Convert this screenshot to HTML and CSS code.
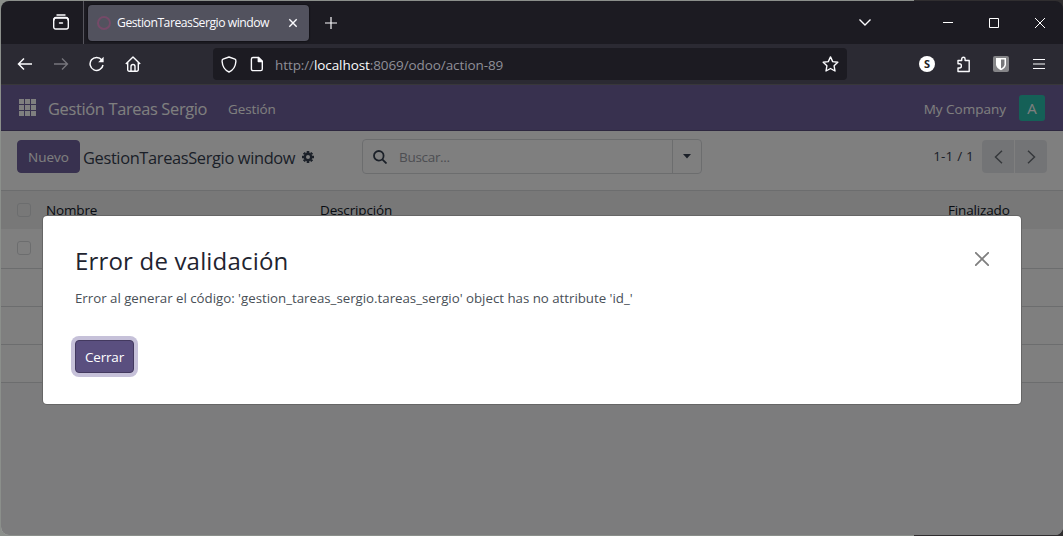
FILE: index.html
```html
<!DOCTYPE html>
<html lang="es">
<head>
<meta charset="utf-8">
<title>GestionTareasSergio window</title>
<link rel="stylesheet" href="styles.css">
</head>
<body>
<div class="window">
  <header class="tabbar">
    <div class="firefox-view">
      <svg width="18" height="18" viewBox="0 0 18 18" fill="none" stroke="#fbfbfe" stroke-width="1.400" stroke-linecap="round"><path d="M5 2h8"/><rect x="1.700" y="5" width="14.600" height="11" rx="2"/><path d="M2 7q0-2.500 2-2.500h10q2 0 2 2.500M7.500 10h3"/></svg>
    </div>
    <div class="tab">
      <span class="favicon"></span>
      <span class="tab-title">GestionTareasSergio window</span>
      <svg class="tab-close" width="10" height="10" viewBox="0 0 10 10" stroke="#fbfbfe" stroke-width="1.400"><path d="M1.300 1.300l7.400 7.400M8.700 1.300L1.300 8.700"/></svg>
    </div>
    <svg class="new-tab" width="12" height="12" viewBox="0 0 12 12" stroke="#fbfbfe" stroke-width="1.200"><path d="M6 0v12M0 6h12"/></svg>
    <div class="window-controls">
      <svg width="14" height="10" viewBox="0 0 14 10" fill="none" stroke="#fbfbfe" stroke-width="1.400"><path d="M1.500 1.500L7 7 12.500 1.500"/></svg>
      <svg class="minimize" width="10" height="10" viewBox="0 0 10 10" stroke="#fff"><path d="M0 4.500h10"/></svg>
      <svg width="10" height="10" viewBox="0 0 10 10" fill="none" stroke="#fff"><path d="M.5.5h9v9h-9z"/></svg>
      <svg width="10" height="10" viewBox="0 0 10 10" stroke="#fff"><path d="M0 0l10 10M10 0L0 10"/></svg>
    </div>
  </header>
  <div class="toolbar">
    <div class="nav-buttons">
      <svg width="16" height="16" viewBox="0 0 16 16" fill="none" stroke="#fbfbfe" stroke-width="1.500"><path d="M15 8H1.500M7 2.500L1.500 8 7 13.500"/></svg>
      <svg width="16" height="16" viewBox="0 0 16 16" fill="none" stroke="#77767d" stroke-width="1.300"><path d="M1 8h13.500M9 2.500L14.500 8 9 13.500"/></svg>
      <svg width="16" height="16" viewBox="0 0 16 16" fill="none" stroke="#fbfbfe" stroke-width="1.500"><path d="M12.800 4A6.500 6.500 0 1 0 14 9"/><path d="M14.600.800v5.400H9.200z" fill="#fbfbfe" stroke="none"/></svg>
      <svg width="16" height="16" viewBox="0 0 16 16" fill="none" stroke="#fbfbfe" stroke-width="1.400" stroke-linejoin="round"><path d="M.8 8L8 .9 15.200 8M2.700 6.500v7.200a1.500 1.500 0 0 0 1.500 1.500h7.600a1.500 1.500 0 0 0 1.500-1.500V6.500"/><path d="M6 15v-4.500a2 2 0 0 1 4 0V15"/></svg>
    </div>
    <div class="urlbar">
      <svg width="16" height="17" viewBox="0 0 16 17" fill="none" stroke="#fbfbfe" stroke-width="1.400" stroke-linejoin="round"><path d="M8 1l6 2.200c1 .4 1 1 .9 2.300C14.600 9.800 12.500 14 8 16 3.500 14 1.400 9.800 1.100 5.500 1 4.200 1 3.600 2 3.200z"/></svg>
      <svg class="page-icon" width="14" height="16" viewBox="0 0 14 16" fill="none" stroke="#fbfbfe" stroke-width="1.400" stroke-linejoin="round"><path d="M3 1.500h5.500L12.300 5.300v7.700a1.600 1.600 0 0 1-1.600 1.600H3A1.600 1.600 0 0 1 1.400 13V3A1.600 1.600 0 0 1 3 1.500z"/><path d="M8.300 1.500v4h4z" fill="#fbfbfe"/></svg>
      <span class="url">http://<span class="host">localhost</span>:8069/odoo/action-89</span>
      <svg class="star" width="17" height="16" viewBox="0 0 17 16" fill="none" stroke="#fbfbfe" stroke-width="1.400" stroke-linejoin="round"><path d="M8.500.9l2.200 4.700 5.100.7-3.700 3.500.9 5.200-4.500-2.500L4 15l.9-5.200L1.200 6.300l5.100-.7z"/></svg>
    </div>
    <div class="extensions">
      <span class="ext-s">S</span>
      <svg width="16" height="17" viewBox="0 0 16 17" fill="none" stroke="#fbfbfe" stroke-width="1.400" stroke-linejoin="round"><path d="M2 7.800V4.500h3.700V3a1.700 1.700 0 0 1 3.400 0v1.500h4.100V15.500H2V12h1.300a2 2 0 0 0 0-4.200z"/></svg>
      <svg width="16" height="16" viewBox="0 0 16 16"><rect width="16" height="16" rx="2" fill="#858588"/><path d="M3 2h10v6.300c0 3-2.500 4.700-5 5.900-2.500-1.200-5-2.900-5-5.900z" fill="#fff"/><path d="M8 3.600h3.500v4.700c0 2-1.700 3.200-3.500 4.200z" fill="#77777a"/></svg>
      <svg width="12" height="12" viewBox="0 0 12 12" stroke="#fbfbfe" stroke-width="1.200"><path d="M0 1.500h12M0 6h12M0 10.500h12"/></svg>
    </div>
  </div>
  <main class="app">
    <nav class="navbar">
      <svg width="17" height="17" viewBox="0 0 17 17" fill="#fff"><path d="M0 0h5v5H0zM6 0h5v5H6zM12 0h5v5h-5zM0 6h5v5H0zM6 6h5v5H6zM12 6h5v5h-5zM0 12h5v5H0zM6 12h5v5H6zM12 12h5v5h-5z"/></svg>
      <span class="brand">Gestión Tareas Sergio</span>
      <span class="menu">Gestión</span>
      <span class="company">My Company</span>
      <span class="avatar">A</span>
    </nav>
    <section class="control-panel">
      <button class="btn new">Nuevo</button>
      <span class="breadcrumb">GestionTareasSergio window</span>
      <svg class="gear" width="12" height="12" viewBox="-6 -6 12 12" fill="none" stroke="#374151"><circle r="3.200" stroke-width="2.400"/><path d="M0-6v2M0 6V4M-6 0h2M6 0H4M-4.200-4.200l1.400 1.400M4.200 4.200L2.800 2.800M-4.200 4.200l1.400-1.400M4.200-4.200L2.800-2.800" stroke-width="2.600"/></svg>
      <div class="search">
        <svg class="lens" width="14" height="14" viewBox="0 0 14 14" fill="none" stroke="#374151" stroke-width="1.800"><circle cx="5.800" cy="5.800" r="4.800"/><path d="M9.300 9.300l4.200 4.200"/></svg>
        <span class="placeholder">Buscar...</span>
        <span class="dropdown"><svg width="8" height="5" viewBox="0 0 8 5"><path d="M0 0h8L4 4.600z" fill="#374151"/></svg></span>
      </div>
      <span class="range">1-1 / 1</span>
      <div class="pager">
        <span><svg width="9" height="14" viewBox="0 0 9 14" fill="none" stroke="#6b7077" stroke-width="1.500"><path d="M8 .7L1.500 7 8 13.300"/></svg></span>
        <span><svg width="9" height="14" viewBox="0 0 9 14" fill="none" stroke="#6b7077" stroke-width="1.500"><path d="M1 .7L7.500 7 1 13.300"/></svg></span>
      </div>
    </section>
    <section class="list">
      <div class="row head"><i class="check"></i><span class="name">Nombre</span><span class="desc">Descripción</span><span class="done">Finalizado</span></div>
      <div class="row"><i class="check"></i></div>
      <div class="row"></div>
      <div class="row"></div>
      <div class="row"></div>
    </section>
    <div class="backdrop">
      <div class="dialog">
        <div class="dialog-head">
          <h1>Error de validación</h1>
          <svg class="dismiss" width="14" height="14" viewBox="0 0 14 14" stroke="#7f7f7f" stroke-width="1.800" stroke-linecap="round"><path d="M.8.800l12.400 12.400M13.200.800L.8 13.200"/></svg>
        </div>
        <p>Error al generar el código: 'gestion_tareas_sergio.tareas_sergio' object has no attribute 'id_'</p>
        <button class="btn close">Cerrar</button>
      </div>
    </div>
  </main>
</div>
</body>
</html>
```
FILE: styles.css
```css
* { box-sizing: border-box; }
body {
  margin: 0;
  width: 1063px;
  height: 536px;
  padding: 1px 0 1px 1px;
  overflow: hidden;
  background: linear-gradient(90deg, #8b8f8b 914px, #302e30 914px);
  font-family: "Open Sans", "Noto Sans", sans-serif;
  font-size: 13.5px;
  white-space: nowrap;
}
svg { display: block; flex: none; }
.window {
  height: 534px;
  border-radius: 8px;
  overflow: hidden;
  display: flex;
  flex-direction: column;
}
.tabbar {
  flex: none;
  height: 43px;
  display: flex;
  align-items: center;
  background: #1c1b22;
  color: #fbfbfe;
}
.firefox-view {
  width: 83px;
  height: 43px;
  padding: 12px 0 0 51px;
  border-right: 1px solid #55545c;
}
.tab {
  width: 221px;
  height: 36px;
  margin-left: 4px;
  padding: 0 11px 0 9px;
  display: flex;
  align-items: center;
  border-radius: 4px;
  background: #52525e;
  box-shadow: 0 0 2px #000;
}
.favicon {
  width: 14px;
  height: 14px;
  border: 2.5px solid #754a68;
  border-radius: 50%;
}
.tab-title {
  margin-left: 6px;
  font-size: 12.2px;
  letter-spacing: -0.48px;
}
.tab-close { margin-left: auto; }
.new-tab { margin-left: 16px; }
.window-controls {
  margin: 0 18px 0 auto;
  display: flex;
  align-items: center;
  gap: 36px;
}
.minimize { margin-left: 35px; }
.toolbar {
  flex: none;
  height: 41px;
  display: flex;
  align-items: center;
  background: #2b2a33;
  border-bottom: 1px solid #38373a;
}
.nav-buttons {
  width: 212px;
  padding-left: 16px;
  display: flex;
  gap: 20px;
}
.urlbar {
  width: 634px;
  height: 32px;
  padding: 0 8px;
  display: flex;
  align-items: center;
  border-radius: 4px;
  background: #1c1b22;
}
.page-icon { margin-left: 13px; }
.url {
  margin-left: 11px;
  padding-top: 2px;
  color: #8f8f98;
  font-size: 13.5px;
  letter-spacing: -0.09px;
}
.host { color: #fbfbfe; }
.star { margin-left: auto; }
.extensions {
  margin-left: 72px;
  display: flex;
  align-items: center;
  gap: 21px;
}
.extensions svg:last-child { margin-left: 3px; }
.ext-s {
  width: 16px;
  height: 16px;
  border-radius: 50%;
  background: #fff;
  color: #222;
  font-size: 11px;
  font-weight: 700;
  line-height: 16px;
  text-align: center;
}
.app {
  position: relative;
  flex: 1;
  background: #f8f9fa;
}
.navbar {
  height: 46px;
  padding: 0 18px 0 18px;
  display: flex;
  align-items: center;
  color: #fff;
  background: #71639e;
  border-bottom: 1px solid #5a4f7f;
}
.brand {
  margin-left: 12px;
  width: 179px;
  padding-top: 2px;
  font-size: 16.4px;
  letter-spacing: -0.33px;
}
.menu {
  padding-top: 2px;
  margin-left: 1px;
  letter-spacing: -0.1px;
}
.company { margin-left: auto; padding-top: 2px; }
.avatar {
  width: 26px;
  height: 26px;
  margin-left: 13px;
  border-radius: 3px;
  background: #2bc0ae;
  font-size: 15px;
  line-height: 26px;
  text-align: center;
}
.control-panel {
  height: 60px;
  padding: 9px 16px 0;
  display: flex;
  align-items: flex-start;
  background: #fff;
  color: #374151;
  border-bottom: 1px solid #d8dadd;
}
.btn {
  padding: 0;
  border: 1px solid #71639e;
  border-radius: 4px;
  background: #71639e;
  color: #fff;
  font: 13.5px "Open Sans", "Noto Sans", sans-serif;
}
.new { width: 63px; height: 33px; }
.breadcrumb {
  width: 214px;
  margin-left: 3px;
  font-size: 16.4px;
  line-height: 35px;
  letter-spacing: -0.35px;
}
.gear { margin: 11px 0 0 5px; }
.search {
  width: 340px;
  height: 35px;
  margin: -1px 0 0 48px;
  padding-left: 10px;
  display: flex;
  align-items: center;
  border: 1px solid #d8dadd;
  border-radius: 4px;
}
.placeholder { margin-left: 12px; color: #9a9ca5; letter-spacing: -0.3px; }
.dropdown {
  width: 29px;
  height: 33px;
  margin-left: auto;
  display: flex;
  align-items: center;
  justify-content: center;
  border-left: 1px solid #d8dadd;
}
.range { margin-left: auto; line-height: 33px; letter-spacing: 0.2px; }
.pager {
  display: flex;
  gap: 1px;
  margin-left: 8px;
}
.pager span {
  width: 32px;
  height: 33px;
  display: flex;
  align-items: center;
  justify-content: center;
  background: #e7e9ed;
}
.pager span:first-child { border-radius: 4px 0 0 4px; }
.pager span:last-child { border-radius: 0 4px 4px 0; }
.row {
  height: 38px;
  padding-left: 16px;
  display: flex;
  align-items: center;
  background: #fff;
  border-bottom: 1px solid #d8dadd;
}
.head {
  background: #f0f0f0;
  border-bottom: 0;
  color: #111827;
  letter-spacing: -0.15px;
}
.head + .row { height: 40px; padding-bottom: 2px; }
.check {
  width: 14px;
  height: 14px;
  border: 1px solid #d8dadd;
  border-radius: 3px;
}
.name { width: 274px; margin-left: 15px; }
.desc { width: 628px; }
.backdrop {
  position: absolute;
  inset: 0;
  padding: 131px 41px 0 42px;
  background: rgba(0, 0, 0, 0.5);
}
.dialog {
  width: 978px;
  height: 188px;
  padding: 28px 32px 0;
  border-radius: 4px;
  background: #fff;
  box-shadow: 0 0 0 1px #666;
}
.dialog-head {
  display: flex;
  justify-content: space-between;
}
.dismiss { margin-top: 8px; }
h1 {
  margin: 0;
  color: #1f2430;
  font-size: 24px;
  font-weight: 400;
  line-height: 34px;
  letter-spacing: 0.18px;
}
p {
  margin: 10px 0 32px;
  color: #495057;
  font-size: 13.3px;
  line-height: 20px;
  letter-spacing: -0.02px;
}
.close {
  width: 59px;
  height: 33px;
  background: #5a4f7f;
  border-color: #43395f;
  box-shadow: 0 0 0 4px #c6c1d9;
  letter-spacing: -0.2px;
}
```
